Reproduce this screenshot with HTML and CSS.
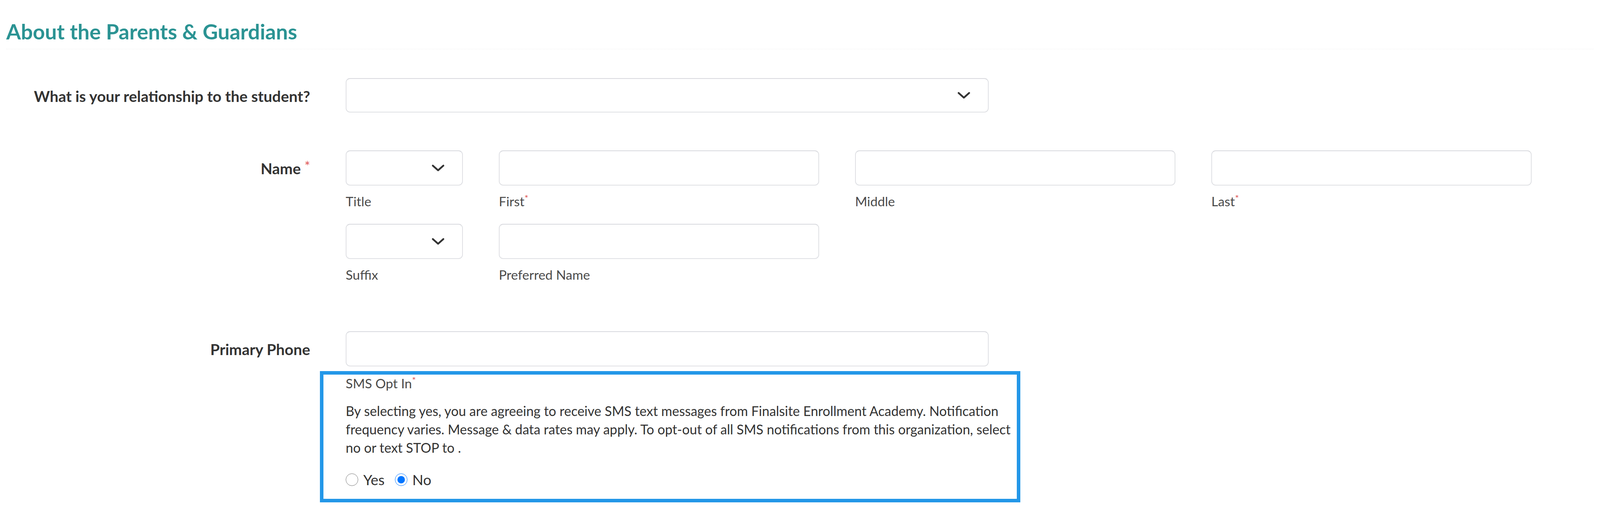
FILE: index.html
```html
<!DOCTYPE html>
<html lang="en">
<head>
    <meta charset="UTF-8">
    <meta name="viewport" content="width=device-width, initial-scale=1.0">
    <title>About the Parents &amp; Guardians</title>
    <link rel="stylesheet" href="styles.css">
</head>
<body>
    <h2 class="section_title">About the Parents &amp; Guardians</h2>

    <form class="form">
        <div class="form_row first_row">
            <label class="row_label">What is your relationship to the student?</label>
            <div class="row_fields">
                <div class="select wide">
                    <svg class="chevron" width="33" height="18" viewBox="0 0 33 18"><polyline points="3,3 16.5,15 30,3" fill="none" stroke="#333" stroke-width="4.5" stroke-linecap="round" stroke-linejoin="round"/></svg>
                </div>
            </div>
        </div>

        <div class="form_row name_row">
            <label class="row_label">Name <span class="req">*</span></label>
            <div class="name_grid">
                <div class="field">
                    <div class="select">
                        <svg class="chevron" width="33" height="18" viewBox="0 0 33 18"><polyline points="3,3 16.5,15 30,3" fill="none" stroke="#333" stroke-width="4.5" stroke-linecap="round" stroke-linejoin="round"/></svg>
                    </div>
                    <div class="sub_label">Title</div>
                </div>
                <div class="field">
                    <input class="input" type="text">
                    <div class="sub_label">First<span class="req">*</span></div>
                </div>
                <div class="field">
                    <input class="input" type="text">
                    <div class="sub_label">Middle</div>
                </div>
                <div class="field">
                    <input class="input" type="text">
                    <div class="sub_label">Last<span class="req">*</span></div>
                </div>
                <div class="field">
                    <div class="select">
                        <svg class="chevron" width="33" height="18" viewBox="0 0 33 18"><polyline points="3,3 16.5,15 30,3" fill="none" stroke="#333" stroke-width="4.5" stroke-linecap="round" stroke-linejoin="round"/></svg>
                    </div>
                    <div class="sub_label">Suffix</div>
                </div>
                <div class="field">
                    <input class="input" type="text">
                    <div class="sub_label">Preferred Name</div>
                </div>
            </div>
        </div>

        <div class="form_row">
            <label class="row_label">Primary Phone</label>
            <div class="row_fields">
                <input class="input wide" type="text">
                <div class="sms_box">
                    <div class="sub_label sms_label">SMS Opt In<span class="req">*</span></div>
                    <p class="sms_text">By selecting yes, you are agreeing to receive SMS text messages from Finalsite Enrollment Academy. Notification frequency varies. Message &amp; data rates may apply. To opt-out of all SMS notifications from this organization, select no or text STOP to .</p>
                    <div class="radios">
                        <label class="radio"><input type="radio" name="sms"> Yes</label>
                        <label class="radio"><input type="radio" name="sms" checked> No</label>
                    </div>
                </div>
            </div>
        </div>
    </form>
</body>
</html>
```

FILE: styles.css
```css
body {
    margin: 0;
    padding: 0 16px;
    font-family: Lato, "Open Sans", sans-serif;
    color: #333;
    background: #fff;
}
.section_title {
    margin: 49px 0 0;
    padding-bottom: 12px;
    font-size: 54px;
    line-height: 64px;
    font-weight: 700;
    color: #2b9393;
    border-bottom: 1px dotted #ececec;
}
.form {
    padding-top: 74px;
}
.form_row {
    display: grid;
    grid-template-columns: 778px 1fr;
    column-gap: 91px;
    align-items: start;
}
.first_row {
    margin-bottom: 97px;
}
.name_row {
    margin-bottom: 125px;
}
.row_label {
    padding-top: 23px;
    text-align: right;
    font-size: 39px;
    line-height: 47px;
    font-weight: 700;
    color: #333;
}
.req {
    color: #e05a5a;
    vertical-align: top;
    font-weight: 400;
}
.row_label .req {
    font-size: 34px;
    line-height: 34px;
}
.sub_label .req {
    font-size: 24px;
    line-height: 24px;
}
.name_grid {
    display: grid;
    grid-template-columns: 300px repeat(3, 820px);
    column-gap: 92px;
    row-gap: 38px;
}
.select, .input {
    box-sizing: border-box;
    display: block;
    width: 100%;
    height: 90px;
    margin: 0;
    padding: 0 20px;
    border: 2px solid #dfe0e4;
    border-top-color: #d8d9de;
    border-radius: 11px;
    background: #fff;
    font-family: inherit;
    font-size: 32px;
}
.select {
    display: flex;
    align-items: center;
    justify-content: flex-end;
    padding-right: 45px;
}
.wide {
    width: 1646px;
}
.first_row .select {
    height: 88px;
}
.sub_label {
    margin-top: 20px;
    font-size: 33.5px;
    line-height: 40px;
    color: #4a4a4a;
}
.sms_box {
    box-sizing: border-box;
    width: 1793px;
    margin: 12px 0 0 -66px;
    padding: 2px 10px 27px 57px;
    border: 9px solid #2397e8;
}
.sms_label {
    margin-top: 0;
}
.sms_text {
    margin: 27px 0 0;
    font-size: 34px;
    line-height: 47px;
    color: #333;
}
.radios {
    display: flex;
    gap: 26px;
    margin-top: 37px;
}
.radio {
    display: flex;
    align-items: center;
    gap: 13px;
    font-size: 37px;
    line-height: 44px;
    color: #333;
}
.radio input {
    width: 32px;
    height: 32px;
    margin: 0;
}
```
